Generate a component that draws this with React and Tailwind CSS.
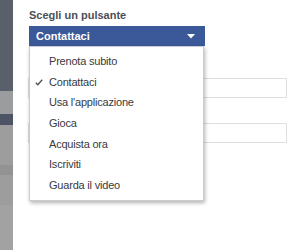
import React from 'react';

const options = [
  'Prenota subito',
  'Contattaci',
  "Usa l'applicazione",
  'Gioca',
  'Acquista ora',
  'Iscriviti',
  'Guarda il video',
];

function App() {
  const selected = 'Contattaci';

  return (
    <div className="flex w-[300px] h-[250px] overflow-hidden bg-white" style={{ fontFamily: '"Liberation Sans", Arial, sans-serif' }}>
      {/* pagina dietro, scurita */}
      <div className="w-[13px] shrink-0 flex flex-col">
        <div className="h-[91px] bg-[#5a5f6c]" />
        <div className="h-[23px] bg-[#9b9c9e]" />
        <div className="h-[11px] bg-[#4c5466]" />
        <div className="h-[40px] bg-[#9d9d9d]" />
        <div className="h-[10px] bg-[#939393]" />
        <div className="h-[30px] bg-[#9d9d9d]" />
        <div className="flex-1 bg-[#a2a2a2]" />
      </div>

      <div className="relative flex-1 pl-[16px] pt-[8px]">
        <div className="text-[11px] font-bold text-[#4b4f56] leading-[15px] h-[18px]">Scegli un pulsante</div>

        <div className="w-[176px] h-[20px] bg-[#3b5998] flex items-center justify-between pl-[7px] pr-[10px]">
          <span className="text-[11px] font-bold text-white">{selected}</span>
          <svg width="8" height="5" viewBox="0 0 8 5">
            <path d="M0 0 L8 0 L4 4.5 Z" fill="#fff" />
          </svg>
        </div>

        {/* campi dietro al menu */}
        <div className="mt-[32px] w-[259px] h-[20px] border border-[#dddfe2] -ml-[1px]" />
        <div className="mt-[25px] w-[259px] h-[20px] border border-[#dddfe2] -ml-[1px]" />

        {/* menu a tendina */}
        <div className="absolute left-[16px] top-[46px] w-[175px] h-[155px] bg-white border border-[#c9ccd1] shadow-[1px_2px_4px_rgba(0,0,0,0.3)] pt-[4px]">
          {options.map((opt) => (
            <div key={opt} className="relative h-[20.67px] flex items-center pl-[19px] text-[11px] tracking-[-0.2px] text-[#373a40]">
              {opt === selected && (
                <svg className="absolute left-[5px] top-[7px]" width="8" height="7" viewBox="0 0 8 7">
                  <path d="M0.8 3.8 L2.8 5.8 L7.2 0.8" fill="none" stroke="#4b4f56" strokeWidth="1.3" />
                </svg>
              )}
              {opt}
            </div>
          ))}
        </div>
      </div>
    </div>
  );
}

export default App;
